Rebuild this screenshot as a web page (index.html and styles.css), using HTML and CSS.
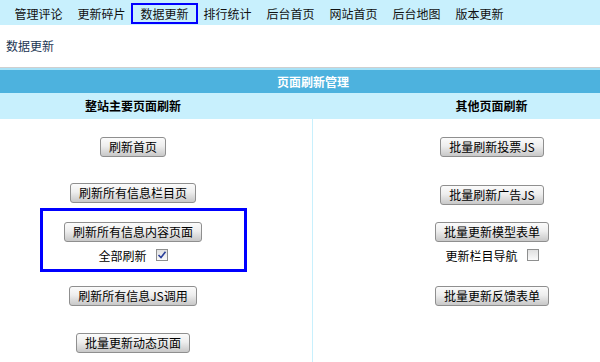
FILE: index.html
```html
<!DOCTYPE html>
<html lang="zh-CN">

<head>
    <meta charset="UTF-8">
    <title>数据更新</title>
    <link rel="stylesheet" href="styles.css">
</head>

<body>
    <ul class="nav">
        <li>管理评论</li>
        <li>更新碎片</li>
        <li class="active">数据更新</li>
        <li>排行统计</li>
        <li>后台首页</li>
        <li>网站首页</li>
        <li>后台地图</li>
        <li>版本更新</li>
    </ul>

    <div class="crumb">数据更新</div>

    <div class="panel">
        <div class="panel-title">页面刷新管理</div>
        <div class="panel-head">
            <div class="col-left">整站主要页面刷新</div>
            <div class="col-right">其他页面刷新</div>
        </div>
        <div class="panel-body">
            <div class="col col-left">
                <button class="btn b1">刷新首页</button>
                <button class="btn b2">刷新所有信息栏目页</button>
                <div class="mark">
                    <button class="btn">刷新所有信息内容页面</button>
                    <label class="check">全部刷新
                        <span class="box">
                            <svg width="10" height="10" viewBox="0 0 10 10">
                                <path d="M1.5 5 L4 7.5 L8.5 1.8" fill="none" stroke="#2a3f9a" stroke-width="1.6" />
                            </svg>
                        </span>
                    </label>
                </div>
                <button class="btn b4">刷新所有信息JS调用</button>
                <button class="btn b5">批量更新动态页面</button>
            </div>
            <div class="col col-right">
                <button class="btn b1">批量刷新投票JS</button>
                <button class="btn r2">批量刷新广告JS</button>
                <button class="btn r3">批量更新模型表单</button>
                <label class="check r4">更新栏目导航
                    <span class="box"></span>
                </label>
                <button class="btn r5">批量更新反馈表单</button>
            </div>
        </div>
    </div>
</body>

</html>
```

FILE: styles.css
```css
* {
    margin: 0;
    padding: 0;
}

body {
    font-family: "Noto Sans CJK SC", "Liberation Sans", sans-serif;
    font-size: 12px;
    color: #000;
    background: #fff;
    overflow: hidden;
}

/* 顶部导航 */
.nav {
    display: flex;
    list-style: none;
    background: #c8f0fd;
    padding: 5px 0 3px 7px;
    height: 17px;
}

.nav li {
    width: 63px;
    height: 17px;
    line-height: 17px;
    text-align: center;
    color: #111;
}

.nav .active {
    outline: 2px solid #0000ff;
}

.crumb {
    padding: 12px 6px;
    line-height: 18px;
    color: #1c3553;
}

/* 刷新管理 */
.panel {
    border-top: 1px solid #cfcfcf;
}

.panel-title {
    border-top: 2px solid #a8e2f7;
    background: #4db2de;
    height: 23px;
    line-height: 23px;
    padding-left: 26px;
    text-align: center;
    color: #fff;
    font-weight: bold;
}

.panel-head {
    display: flex;
    background: #c8f0fd;
    height: 26px;
    line-height: 26px;
    font-weight: bold;
}

.col-left {
    width: 266px;
    padding-right: 46px;
    text-align: center;
}

.col-right {
    flex: 1;
    padding-left: 71px;
    text-align: center;
}

.panel-body {
    display: flex;
    height: 260px;
}

.col {
    display: flex;
    flex-direction: column;
    align-items: center;
    padding-top: 18px;
}

.panel-body .col-right {
    border-left: 1px solid #c8f0fd;
}

.btn {
    font-family: inherit;
    font-size: 12px;
    color: #000;
    height: 20px;
    line-height: 18px;
    padding: 0 8px;
    border: 1px solid #8f8f8f;
    border-radius: 3px;
    background: linear-gradient(#fbfbfb, #eeeeee 45%, #dcdcdc 70%, #c8c8c8);
    cursor: pointer;
}

.b2 {
    margin-top: 26px;
}

.b4 {
    margin-top: 14px;
}

.b5 {
    margin-top: 27px;
}

.r2 {
    margin-top: 28px;
}

.r3 {
    margin-top: 17px;
}

.r4 {
    margin-top: 4px;
}

.r5 {
    margin-top: 22px;
}

/* 标注框 */
.mark {
    margin-top: 5px;
    margin-left: 20px;
    width: 181px;
    padding: 11px 20px 5px 0;
    border: 3px solid #0000ff;
    display: flex;
    flex-direction: column;
    align-items: center;
}

.check {
    display: flex;
    align-items: center;
    height: 18px;
    margin-top: 4px;
    gap: 9px;
}

.box {
    width: 10px;
    height: 10px;
    border: 1px solid #8e8f8f;
    background: linear-gradient(#e0e0e0, #fafafa);
    display: flex;
    align-items: center;
    justify-content: center;
}
```
